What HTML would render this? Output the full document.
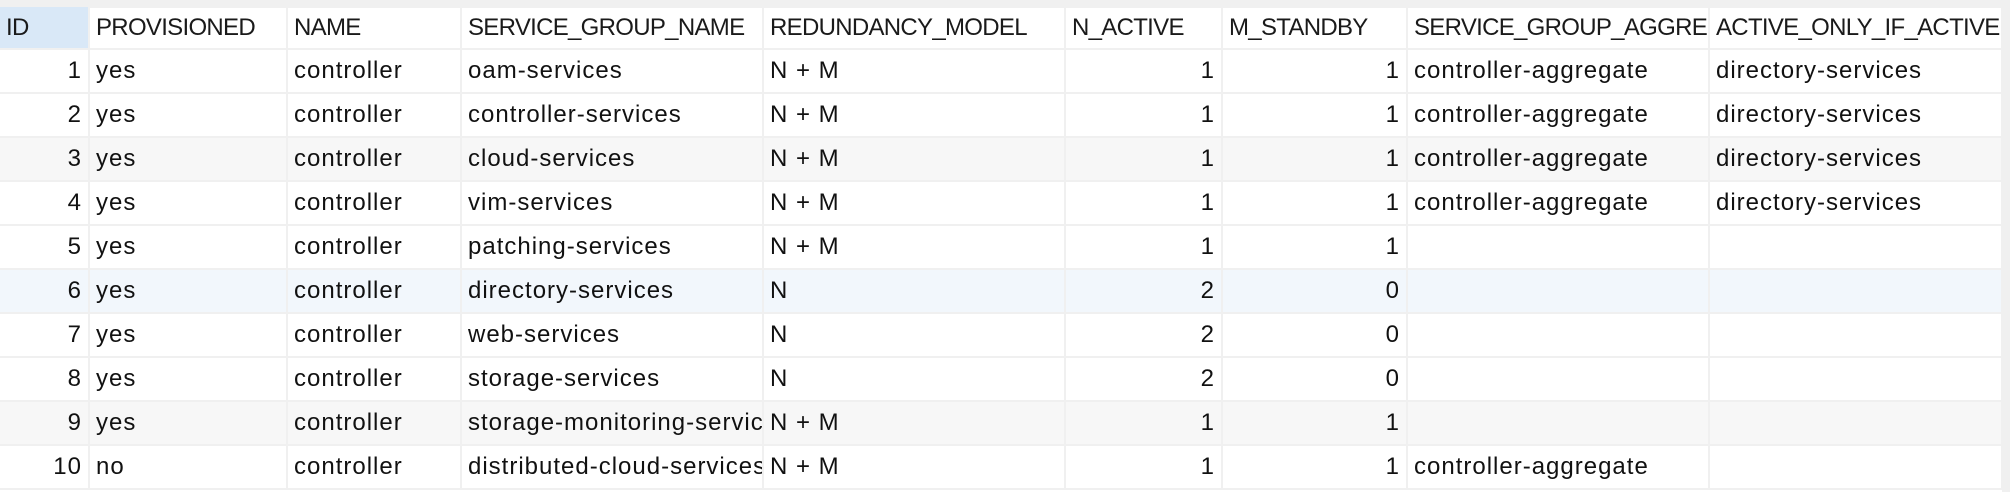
<!DOCTYPE html>
<html><head><meta charset="utf-8"><style>
html,body{margin:0;padding:0;width:2010px;height:492px;overflow:hidden;background:#fff;}
.top{position:absolute;left:0;top:0;width:2010px;height:8px;background:#f0f0f0;}
.sb{position:absolute;left:2002px;top:0;width:8px;height:492px;background:#f0f0f0;}
table{position:absolute;left:0;top:7px;border-collapse:collapse;table-layout:fixed;width:2002px;font-family:"Liberation Sans","Noto Sans CJK SC",sans-serif;color:#111;}
td,th{border:2px solid #f0f0f0;height:42px;padding:0 6px;white-space:nowrap;overflow:hidden;font-size:24px;letter-spacing:1px;text-align:left;font-weight:normal;}
th{height:41px;font-size:24px;letter-spacing:-0.7px;color:#1a1a1a;border-top:none;}
td.n{text-align:right;}
tr.g td{background:#f7f7f7;}
tr.s td{background:#f2f7fc;}
th.sel{background:#d9e8f7;}
td:first-child,th:first-child{border-left:none;}
</style></head><body>
<div class="top"></div>
<table>
<colgroup><col style="width:89px"><col style="width:198px"><col style="width:174px"><col style="width:302px"><col style="width:302px"><col style="width:157px"><col style="width:185px"><col style="width:302px"><col style="width:293px"></colgroup>
<tr><th class="sel">ID</th><th>PROVISIONED</th><th>NAME</th><th>SERVICE_GROUP_NAME</th><th>REDUNDANCY_MODEL</th><th>N_ACTIVE</th><th>M_STANDBY</th><th>SERVICE_GROUP_AGGREGATE</th><th>ACTIVE_ONLY_IF_ACTIVE</th></tr>
<tr><td class="n">1</td><td>yes</td><td>controller</td><td>oam-services</td><td>N + M</td><td class="n">1</td><td class="n">1</td><td>controller-aggregate</td><td>directory-services</td></tr>
<tr><td class="n">2</td><td>yes</td><td>controller</td><td>controller-services</td><td>N + M</td><td class="n">1</td><td class="n">1</td><td>controller-aggregate</td><td>directory-services</td></tr>
<tr class="g"><td class="n">3</td><td>yes</td><td>controller</td><td>cloud-services</td><td>N + M</td><td class="n">1</td><td class="n">1</td><td>controller-aggregate</td><td>directory-services</td></tr>
<tr><td class="n">4</td><td>yes</td><td>controller</td><td>vim-services</td><td>N + M</td><td class="n">1</td><td class="n">1</td><td>controller-aggregate</td><td>directory-services</td></tr>
<tr><td class="n">5</td><td>yes</td><td>controller</td><td>patching-services</td><td>N + M</td><td class="n">1</td><td class="n">1</td><td></td><td></td></tr>
<tr class="s"><td class="n">6</td><td>yes</td><td>controller</td><td>directory-services</td><td>N</td><td class="n">2</td><td class="n">0</td><td></td><td></td></tr>
<tr><td class="n">7</td><td>yes</td><td>controller</td><td>web-services</td><td>N</td><td class="n">2</td><td class="n">0</td><td></td><td></td></tr>
<tr><td class="n">8</td><td>yes</td><td>controller</td><td>storage-services</td><td>N</td><td class="n">2</td><td class="n">0</td><td></td><td></td></tr>
<tr class="g"><td class="n">9</td><td>yes</td><td>controller</td><td>storage-monitoring-services</td><td>N + M</td><td class="n">1</td><td class="n">1</td><td></td><td></td></tr>
<tr><td class="n">10</td><td>no</td><td>controller</td><td>distributed-cloud-services</td><td>N + M</td><td class="n">1</td><td class="n">1</td><td>controller-aggregate</td><td></td></tr>
</table>
<div class="sb"></div>
</body></html>
